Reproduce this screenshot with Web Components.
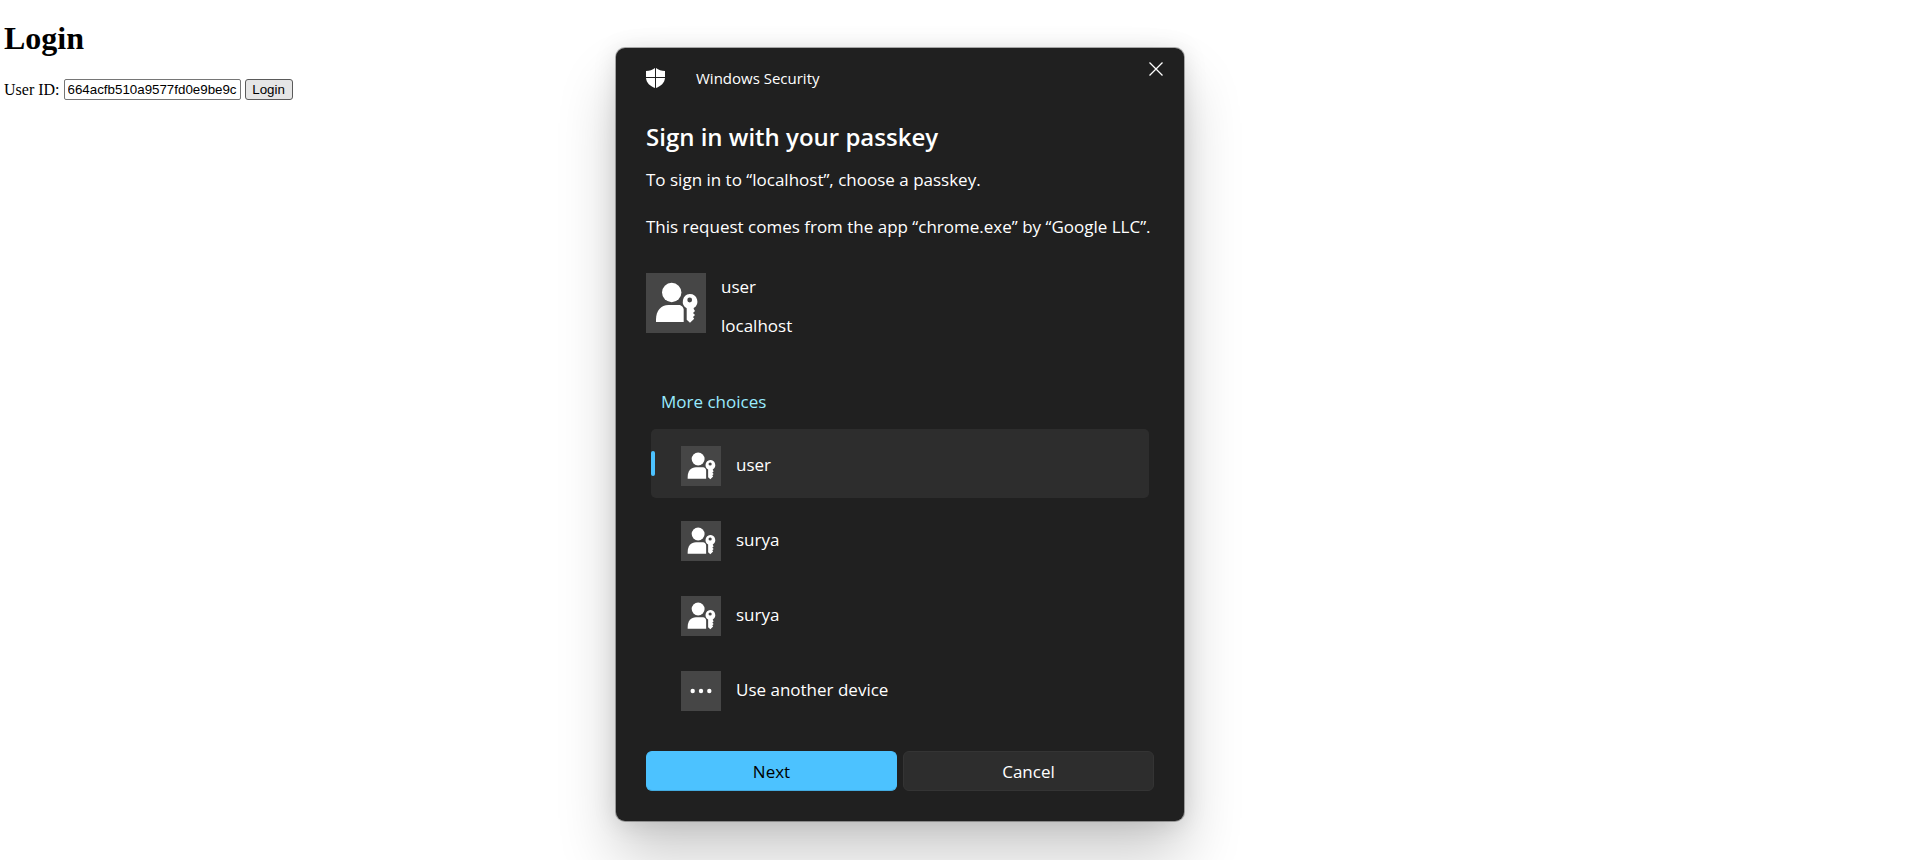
<!DOCTYPE html>
<html lang="en">
<head>
<meta charset="utf-8">
<title>Login</title>
<style>
  html, body { margin: 0; background: #fff; color: #000; }
  body { font-family: "Liberation Serif", serif; font-size: 16px; min-height: 100vh; overflow: hidden; }
</style>
</head>
<body>
<login-page></login-page>
<security-dialog>
  <span slot="title">Windows Security</span>
  <span slot="heading">Sign in with your passkey</span>
  <p slot="message">To sign in to “localhost”, choose a passkey.</p>
  <p slot="message">This request comes from the app “chrome.exe” by “Google LLC”.</p>
  <passkey-account slot="body">
    <span slot="name">user</span>
    <span slot="site">localhost</span>
  </passkey-account>
  <passkey-choices slot="body"></passkey-choices>
</security-dialog>

<script>
const define = (name, html) => {
  const t = document.createElement('template');
  t.innerHTML = html;
  customElements.define(name, class extends HTMLElement {
    constructor() {
      super();
      this.attachShadow({ mode: 'open' }).append(t.content.cloneNode(true));
    }
  });
};

define('login-page', `
<style>
  :host { display: block; padding: 0 4px; }
  h1 { margin: 0; padding: 20px 0 22px; font-size: 32px; line-height: 37px; font-weight: 700; }
  form { display: flex; align-items: center; gap: 4px; line-height: 18px; }
  input, button { box-sizing: border-box; height: 21px; font-family: "Liberation Sans", sans-serif; line-height: 15px; color: #000; border: 1px solid #767676; border-radius: 2px; }
  input { width: 177px; padding: 1px 3px; background: #fff; }
  button { width: 48px; padding: 0; background: #e5e5e5; border-color: #5a5a5a; border-radius: 3px; }
</style>
<h1>Login</h1>
<form onsubmit="return false">
  <label for="uid">User ID:</label>
  <input id="uid" type="text" value="664acfb510a9577fd0e9be9c">
  <button>Login</button>
</form>`);

define('tile-icon', `
<style>
  :host { display: block; flex: none; width: 40px; height: 40px; background: #464646; }
  svg { display: block; width: 100%; height: 100%; fill: #fff; }
  .dots { display: none; }
  :host([kind="more"]) .dots { display: block; }
  :host([kind="more"]) .key { display: none; }
</style>
<svg class="key" viewBox="0 0 60 60" aria-hidden="true">
  <circle cx="25.700" cy="19.500" r="9.700"/>
  <path d="M10 49V46.500C10 37.500 15 32 22.500 32H33C35.500 32 37.700 34.500 37.700 37V49Z"/>
  <path fill-rule="evenodd" d="M43.700 21a7.600 7.600 0 0 1 4 14.100V36l1.300 2-2 2 2 2-2 2 1.200 1.800-4.200 4-3.300-3V35.200A7.600 7.600 0 0 1 43.700 21Zm0 3.600a2.400 2.400 0 1 0 0 4.800 2.400 2.400 0 0 0 0-4.800Z"/>
</svg>
<svg class="dots" viewBox="0 0 40 40" aria-hidden="true">
  <circle cx="11.700" cy="20" r="2.200"/><circle cx="20" cy="20" r="2.200"/><circle cx="28.300" cy="20" r="2.200"/>
</svg>`);

define('passkey-account', `
<style>
  :host { display: flex; gap: 15px; margin-top: 34px; }
  tile-icon { width: 60px; height: 60px; }
  div { display: flex; flex-direction: column; gap: 15px; padding-top: 2px; line-height: 24px; }
</style>
<tile-icon></tile-icon>
<div><slot name="name"></slot><slot name="site"></slot></div>`);

define('passkey-choices', `
<style>
  :host { display: block; padding: 0 5px; margin-top: 52px; }
  a { display: block; width: max-content; padding-left: 10px; color: #99ebff; text-decoration: none; line-height: 24px; margin-bottom: 15px; }
  .list { display: flex; flex-direction: column; gap: 6px; }
  label { display: flex; align-items: center; height: 69px; border-radius: 5px; }
  label:has(:checked) { background: #2d2d2d; }
  input { appearance: none; margin: 0 26px 0 0; width: 4px; height: 25px; border-radius: 2px; }
  input:checked { background: #4cc2ff; }
  tile-icon { margin: 4px 15px 0 0; }
  span { padding-top: 2px; }
</style>
<a href="#">More choices</a>
<div class="list" role="radiogroup" aria-label="More choices">
  <label><input type="radio" name="key" checked><tile-icon></tile-icon><span>user</span></label>
  <label><input type="radio" name="key"><tile-icon></tile-icon><span>surya</span></label>
  <label><input type="radio" name="key"><tile-icon></tile-icon><span>surya</span></label>
  <label><input type="radio" name="key"><tile-icon kind="more"></tile-icon><span>Use another device</span></label>
</div>`);

define('security-dialog', `
<style>
  :host { position: absolute; inset: 0; display: flex; justify-content: center; align-items: flex-start; padding: 48px 111px 0 0; pointer-events: none; }
  section { box-sizing: border-box; width: 568px; padding: 0 30px 30px; pointer-events: auto;
    background: #202020; color: #fff; border-radius: 9px; font: 17px/24px "Open Sans", "Noto Sans", sans-serif;
    box-shadow: 0 0 0 1px rgba(0,0,0,.3), 0 36px 60px rgba(0,0,0,.2), 0 2px 24px rgba(0,0,0,.12); }
  header { display: flex; align-items: flex-start; justify-content: space-between; }
  .brand { display: flex; align-items: center; gap: 31px; padding-top: 18px; font-size: 15px; }
  .brand svg { width: 19px; height: 20px; }
  .close { margin: 8px -15px 0 0; width: 26px; height: 26px; padding: 0; border: 0; background: none; display: grid; place-items: center; }
  h2 { margin: 31px 0 0; font-size: 24px; line-height: 32px; font-weight: 600; }
  .message { display: flex; flex-direction: column; gap: 23px; margin-top: 15px; }
  ::slotted(p) { margin: 0; white-space: nowrap; }
  footer { display: grid; grid-template-columns: 1fr 1fr; gap: 6px; margin-top: 28px; }
  footer button { height: 40px; padding: 2px 0 0; font: inherit; border-radius: 6px; color: #fff; background: #2d2d2d; border: 1px solid #343434; }
  footer .primary { background: #4cc2ff; border-color: #4cc2ff #4cc2ff #43abe0; color: #000; }
</style>
<section role="dialog" aria-labelledby="heading">
  <header>
    <div class="brand">
      <svg viewBox="0 0 19 20" fill="#fff" aria-hidden="true">
        <path d="M9 0V9H0V3C3.500 3 6.500 2 9 0ZM10 0C12.500 2 15.500 3 19 3V9H10ZM0 10H9V20C4 18 .5 15 0 10ZM10 10H19C18.500 15 15 18 10 20Z"/>
      </svg>
      <slot name="title"></slot>
    </div>
    <button class="close" aria-label="Close">
      <svg width="14" height="14" viewBox="0 0 14 14" stroke="#fff" stroke-width="1.300" aria-hidden="true"><path d="M.5.5l13 13M13.500.5l-13 13"/></svg>
    </button>
  </header>
  <h2 id="heading"><slot name="heading"></slot></h2>
  <div class="message"><slot name="message"></slot></div>
  <slot name="body"></slot>
  <footer>
    <button class="primary">Next</button>
    <button>Cancel</button>
  </footer>
</section>`);
</script>
</body>
</html>
